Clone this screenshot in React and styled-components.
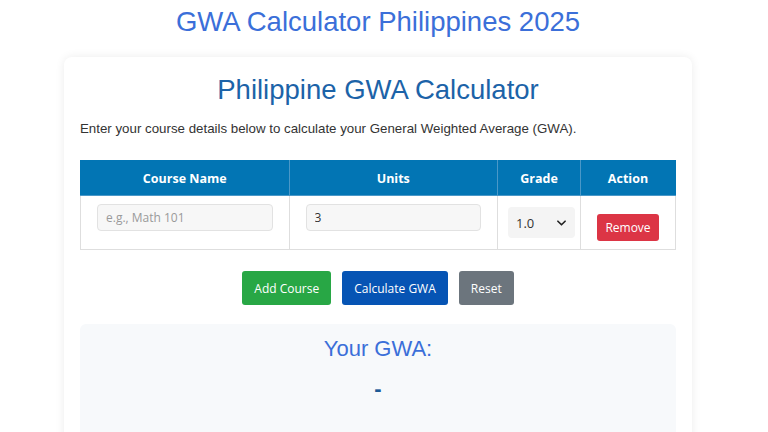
import React from 'react';
import styled, { createGlobalStyle } from 'styled-components';

const GlobalStyle = createGlobalStyle`
  body {
    margin: 0;
    background: #ffffff;
    font-family: "Liberation Sans", Arial, sans-serif;
    color: #333;
  }
`;

export default function App() {
  return (
    <>
      <GlobalStyle />
      <Page>
        <Title>GWA Calculator Philippines 2025</Title>
        <Card>
          <Heading>Philippine GWA Calculator</Heading>
          <Intro>Enter your course details below to calculate your General Weighted Average (GWA).</Intro>
          <Table>
            <thead>
              <tr>
                <Th width="210">Course Name</Th>
                <Th width="210">Units</Th>
                <Th width="82">Grade</Th>
                <Th width="94">Action</Th>
              </tr>
            </thead>
            <tbody>
              <tr>
                <Td>
                  <TextInput placeholder="e.g., Math 101" />
                </Td>
                <Td>
                  <TextInput defaultValue="3" />
                </Td>
                <Td>
                  <SelectWrap>
                    <Select defaultValue="1.0">
                      <option>1.0</option>
                      <option>1.25</option>
                      <option>1.5</option>
                      <option>1.75</option>
                      <option>2.0</option>
                    </Select>
                    <Chevron viewBox="0 0 10 6">
                      <path d="M1 1l4 4 4-4" fill="none" stroke="#222" strokeWidth="1.8" strokeLinecap="round" strokeLinejoin="round" />
                    </Chevron>
                  </SelectWrap>
                </Td>
                <Td center>
                  <Button color="#dc3545" small>Remove</Button>
                </Td>
              </tr>
            </tbody>
          </Table>
          <Actions>
            <Button color="#28a745">Add Course</Button>
            <Button color="#0654b4">Calculate GWA</Button>
            <Button color="#6c757d">Reset</Button>
          </Actions>
          <Result>
            <ResultLabel>Your GWA:</ResultLabel>
            <ResultValue>-</ResultValue>
          </Result>
        </Card>
      </Page>
    </>
  );
}

const Page = styled.div`
  width: 628px;
  margin-left: 64px;
  padding-top: 6px;
`;

const Title = styled.h1`
  margin: 0;
  text-align: center;
  font-size: 27.5px;
  line-height: 32px;
  font-weight: normal;
  color: #3b6fd9;
`;

const Card = styled.div`
  margin-top: 19px;
  background: #fff;
  border-radius: 8px;
  box-shadow: 0 0 10px rgba(0, 0, 0, 0.08);
  padding: 16px 16px 40px;
`;

const Heading = styled.h2`
  margin: 0;
  text-align: center;
  font-size: 27.5px;
  line-height: 34px;
  font-weight: normal;
  color: #1c63a8;
`;

const Intro = styled.p`
  margin: 13px 0 0;
  font-size: 13.3px;
  line-height: 18px;
  color: #333;
`;

const Table = styled.table`
  margin-top: 22px;
  width: 100%;
  border-collapse: collapse;
  font-family: "Open Sans", "Noto Sans", sans-serif;
`;

const Th = styled.th`
  width: ${p => p.width}px;
  height: 34px;
  padding: 0;
  background: #0275b4;
  color: #fff;
  font-size: 12.5px;
  font-weight: 700;
  border: 1px solid #4a98c8;
  border-top-color: #0275b4;
  &:first-child { border-left-color: #0275b4; }
  &:last-child { border-right-color: #0275b4; }
`;

const Td = styled.td`
  height: 53px;
  padding: 0 16px;
  border: 1px solid #dedede;
  vertical-align: middle;
  text-align: ${p => (p.center ? 'center' : 'left')};
  &:nth-child(3) { padding: 0 4px 0 10px; }
`;

const TextInput = styled.input`
  display: block;
  box-sizing: border-box;
  width: 100%;
  height: 27px;
  margin-bottom: 10px;
  padding: 0 8px;
  border: 1px solid #e2e2e2;
  border-radius: 4px;
  background: #f7f7f7;
  font-family: "Open Sans", "Noto Sans", sans-serif;
  font-size: 12px;
  color: #333;
  &::placeholder { color: #9a9a9a; }
`;

const SelectWrap = styled.div`
  position: relative;
  width: 67px;
`;

const Select = styled.select`
  appearance: none;
  display: block;
  box-sizing: border-box;
  width: 100%;
  height: 31px;
  padding: 0 8px;
  border: none;
  border-radius: 4px;
  background: #f4f4f4;
  font-family: "Open Sans", "Noto Sans", sans-serif;
  font-size: 13px;
  color: #333;
`;

const Chevron = styled.svg`
  position: absolute;
  right: 9px;
  top: 13px;
  width: 9px;
  height: 6px;
  pointer-events: none;
`;

const Button = styled.button`
  height: ${p => (p.small ? 27 : 34)}px;
  margin-top: ${p => (p.small ? 10 : 0)}px;
  padding: 0 ${p => (p.small ? 8 : 12)}px;
  border: none;
  border-radius: 3px;
  background: ${p => p.color};
  color: #fff;
  font-family: "Open Sans", "Noto Sans", sans-serif;
  font-size: 12px;
  cursor: pointer;
`;

const Actions = styled.div`
  display: flex;
  justify-content: center;
  gap: 11px;
  margin-top: 21px;
`;

const Result = styled.div`
  margin-top: 19px;
  background: #f7f9fb;
  border-radius: 6px;
  padding: 12px 0 40px;
  text-align: center;
`;

const ResultLabel = styled.h3`
  margin: 0;
  font-size: 22px;
  line-height: 26px;
  font-weight: normal;
  color: #3b6fd9;
`;

const ResultValue = styled.div`
  margin-top: 13px;
  font-size: 22px;
  line-height: 28px;
  font-weight: bold;
  color: #1d5a96;
`;
